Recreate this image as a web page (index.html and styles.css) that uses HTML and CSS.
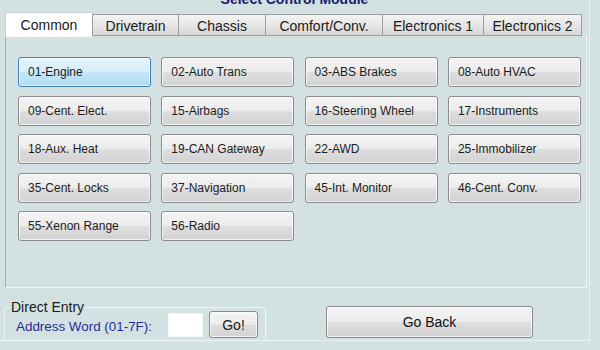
FILE: index.html
```html
<!DOCTYPE html>
<html>
<head>
<meta charset="utf-8">
<link rel="stylesheet" href="styles.css">
</head>
<body>
<div class="app">
  <div class="title">Select Control Module</div>
  <div class="tabs">
    <div class="tab active w-common">Common</div>
    <div class="tab w-drive">Drivetrain</div>
    <div class="tab w-chassis">Chassis</div>
    <div class="tab w-comfort">Comfort/Conv.</div>
    <div class="tab w-elec1">Electronics 1</div>
    <div class="tab w-elec2">Electronics 2</div>
  </div>
  <div class="panel">
    <div class="grid">
      <button class="mod selected">01-Engine</button>
      <button class="mod">02-Auto Trans</button>
      <button class="mod">03-ABS Brakes</button>
      <button class="mod">08-Auto HVAC</button>
      <button class="mod">09-Cent. Elect.</button>
      <button class="mod">15-Airbags</button>
      <button class="mod">16-Steering Wheel</button>
      <button class="mod">17-Instruments</button>
      <button class="mod">18-Aux. Heat</button>
      <button class="mod">19-CAN Gateway</button>
      <button class="mod">22-AWD</button>
      <button class="mod">25-Immobilizer</button>
      <button class="mod">35-Cent. Locks</button>
      <button class="mod">37-Navigation</button>
      <button class="mod">45-Int. Monitor</button>
      <button class="mod">46-Cent. Conv.</button>
      <button class="mod">55-Xenon Range</button>
      <button class="mod">56-Radio</button>
    </div>
  </div>
  <div class="bottom">
    <div class="group">
      <div class="legend">Direct Entry</div>
      <div class="entry">
        <span class="label">Address Word (01-7F):</span>
        <input class="addr" type="text">
        <button class="btn go">Go!</button>
      </div>
    </div>
    <button class="btn back">Go Back</button>
  </div>
</div>
</body>
</html>
```
FILE: styles.css
```css
html, body {
  margin: 0;
  padding: 0;
  background: #d3e1e3;
  overflow: hidden;
}
body {
  width: 600px;
  height: 350px;
  font-family: "Liberation Sans", Arial, sans-serif;
}
.app {
  width: 589px;
  height: 340px;
  border-right: 1px solid #eaf3f4;
  border-bottom: 1px solid #eaf3f4;
  display: flex;
  flex-direction: column;
}
.title {
  margin-top: -9px;
  height: 16px;
  line-height: 16px;
  text-align: center;
  font-weight: bold;
  font-size: 14px;
  color: #17206e;
}
.tabs {
  display: flex;
  align-items: flex-end;
  margin-top: 5px;
  margin-left: 5px;
  height: 24px;
  position: relative;
  z-index: 1;
}
.tab {
  box-sizing: border-box;
  height: 22px;
  padding-top: 2px;
  line-height: 19px;
  text-align: center;
  font-size: 14px;
  color: #1a1a1a;
  border: 1px solid #9c9fa1;
  margin-left: -1px;
  background: linear-gradient(#f3f3f3, #e6e6e6 50%, #d8d8d8);
}
.tab.active {
  margin-left: 0;
  height: 25px;
  margin-bottom: -1px;
  line-height: 21px;
  background: #ffffff;
  border-color: #c6cfd1;
  border-bottom: none;
}
.w-common { width: 88px; }
.w-drive { width: 87px; }
.w-chassis { width: 88px; }
.w-comfort { width: 118px; }
.w-elec1 { width: 102px; }
.w-elec2 { width: 99px; }
.panel {
  box-sizing: border-box;
  margin-left: 5px;
  width: 582px;
  height: 252px;
  border-left: 1px solid #a3adaf;
  border-right: 1px solid #eef5f6;
  border-bottom: 1px solid #eef5f6;
  padding: 21px 0 0 12px;
}
.grid {
  display: grid;
  grid-template-columns: repeat(4, 133px);
  grid-auto-rows: 30px;
  column-gap: 10.3px;
  row-gap: 8.5px;
}
.mod, .btn {
  box-sizing: border-box;
  margin: 0;
  font-family: "Liberation Sans", Arial, sans-serif;
  color: #1c1c1c;
  border: 1px solid #8a8c8d;
  border-radius: 3px;
  background: linear-gradient(#f4f4f4 0%, #ececec 48%, #dedede 52%, #d2d2d2 100%);
  box-shadow: inset 0 0 0 1px rgba(255, 255, 255, 0.7);
}
.mod {
  font-size: 12px;
  text-align: left;
  padding: 0 0 0 9px;
  height: 30px;
}
.mod.selected {
  border-color: #3d84b5;
  background: linear-gradient(#e6f4fc 0%, #d6eefa 48%, #c3e5f7 52%, #b3dcf2 100%);
  box-shadow: inset 0 0 0 1px rgba(255, 255, 255, 0.6);
}
.bottom {
  display: flex;
  align-items: flex-start;
  height: 52px;
}
.group {
  box-sizing: border-box;
  margin: 19px 0 0 4px;
  width: 262px;
  height: 34px;
  border: 1px solid #edf4f5;
  border-radius: 3px;
}
.legend {
  display: block;
  width: fit-content;
  margin: -9px 0 0 5px;
  padding: 0 1px;
  height: 16px;
  line-height: 16px;
  font-size: 14px;
  color: #1a1a1a;
  background: #d3e1e3;
}
.entry {
  display: flex;
  align-items: center;
  height: 27px;
  margin-top: -4px;
  padding-left: 11px;
}
.label {
  width: 152px;
  font-size: 13.4px;
  color: #1f2d96;
  padding-top: 3px;
}
.addr {
  box-sizing: border-box;
  width: 35px;
  height: 24px;
  margin: 0 6px 0 0;
  padding: 0;
  border: 1px solid #f4f7f8;
  background: #ffffff;
  outline: none;
}
.go {
  width: 49px;
  height: 27px;
  font-size: 14px;
  padding: 0;
}
.back {
  margin: 18px 0 0 60px;
  width: 207px;
  height: 32px;
  font-size: 14px;
  padding: 0;
  color: #111;
}
```
